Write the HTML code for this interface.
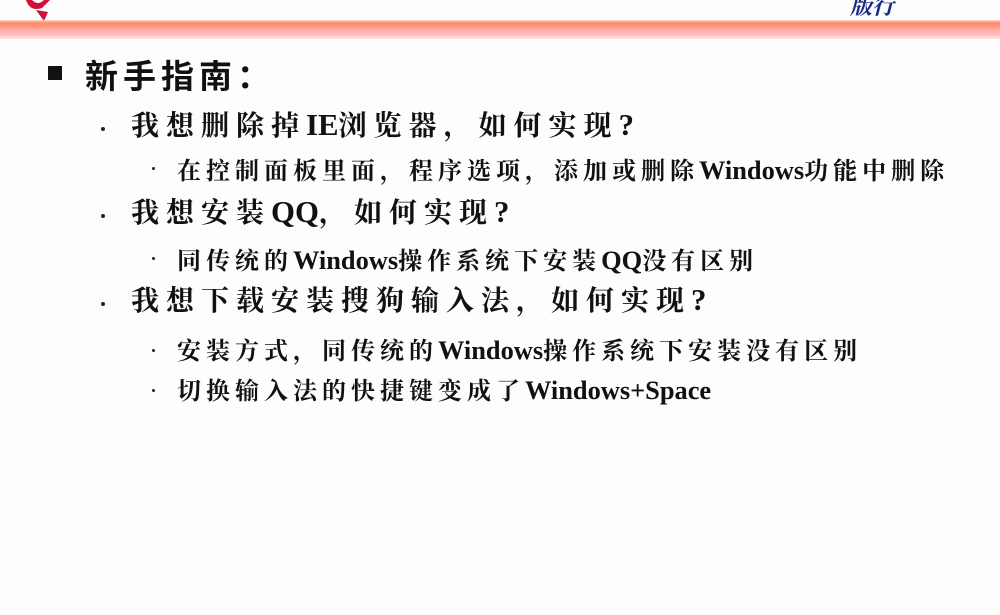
<!DOCTYPE html>
<html><head><meta charset="utf-8"><style>
html,body{margin:0;padding:0}
body{width:1000px;height:615px;background:#fdfdfd;position:relative;overflow:hidden;font-family:"Liberation Serif","Noto Serif CJK SC","Noto Sans CJK SC",serif;color:#111;font-weight:bold}
.band{position:absolute;left:0;top:20px;width:1000px;height:19px;background:linear-gradient(#fbd8c8 0,#ff8a6e 3px,#ff9a7e 7px,#ffb0a8 10px,#ffb8c0 14px,#ffe6d6 19px)}
.t{position:absolute;white-space:nowrap}
.l1{font-family:"Liberation Sans","Noto Sans CJK SC",sans-serif;font-size:33px;left:85px;top:50px;letter-spacing:5px}
.sq{position:absolute;left:48px;top:66px;width:14px;height:14px;background:#111}
.l2{font-size:28px;left:131px;letter-spacing:7px}
.l3{font-size:24px;left:177px;letter-spacing:5px}
.e{letter-spacing:0;font-size:1.1em;line-height:1}
.d{position:absolute;width:4px;height:4px;background:#222;border-radius:50%}
</style></head><body>
<svg style="position:absolute;left:20px;top:0" width="40" height="22"><path d="M6 0 Q10 12 22 8 L30 0 L24 0 Q18 6 12 0Z" fill="#d0103a"/><path d="M16 10 L28 12 L24 21Z" fill="#d0103a"/></svg>
<div class="t" style="left:850px;top:-10px;font-size:22px;color:#1a2a80;font-style:italic">版行</div>
<div class="band"></div>
<div class="sq"></div>
<div class="t l1">新手指南：</div>
<div class="d" style="left:101px;top:127px"></div>
<div class="t l2" style="top:104px">我想删除掉<span class="e">IE</span>浏览器，如何实现<span class="e">?</span></div>
<div class="d" style="left:152px;top:167px;width:3px;height:3px"></div>
<div class="t l3" style="top:151px">在控制面板里面，程序选项，添加或删除<span class="e">Windows</span>功能中删除</div>
<div class="d" style="left:101px;top:214px"></div>
<div class="t l2" style="top:191px">我想安装<span class="e">QQ</span>，如何实现<span class="e">?</span></div>
<div class="d" style="left:152px;top:257px;width:3px;height:3px"></div>
<div class="t l3" style="top:241px">同传统的<span class="e">Windows</span>操作系统下安装<span class="e">QQ</span>没有区别</div>
<div class="d" style="left:101px;top:302px"></div>
<div class="t l2" style="top:279px">我想下载安装搜狗输入法，如何实现<span class="e">?</span></div>
<div class="d" style="left:152px;top:349px;width:3px;height:3px"></div>
<div class="t l3" style="top:331px">安装方式，同传统的<span class="e">Windows</span>操作系统下安装没有区别</div>
<div class="d" style="left:152px;top:389px;width:3px;height:3px"></div>
<div class="t l3" style="top:371px">切换输入法的快捷键变成了<span class="e">Windows+Space</span></div>
</body></html>
